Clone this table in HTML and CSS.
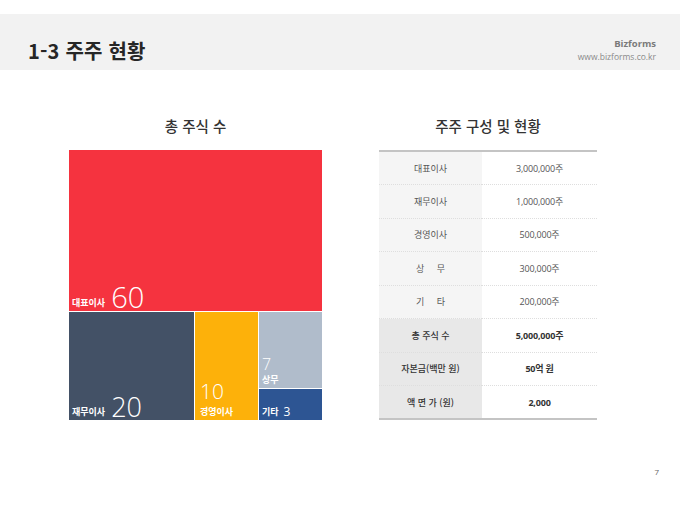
FILE: index.html
```html
<!DOCTYPE html>
<html lang="ko">
<head>
<meta charset="utf-8">
<link rel="stylesheet" href="styles.css">
</head>
<body>
<div class="page">
  <header class="header">
    <h1 class="title">1-3 주주 현황</h1>
    <div class="brand">
      <div class="brand-name">Bizforms</div>
      <div class="brand-url">www.bizforms.co.kr</div>
    </div>
  </header>
  <main class="main">
    <section class="col col-left">
      <h2 class="sec-title">총 주식 수</h2>
      <div class="treemap">
        <div class="tile tile-red">
          <span class="lbl">대표이사</span><span class="num num-60">60</span>
        </div>
        <div class="tm-row">
          <div class="tile tile-navy">
            <span class="lbl">재무이사</span><span class="num num-20">20</span>
          </div>
          <div class="tile tile-yellow">
            <span class="num num-10">10</span>
            <span class="lbl">경영이사</span>
          </div>
          <div class="tm-col">
            <div class="tile tile-gray">
              <span class="num num-7">7</span>
              <span class="lbl">상무</span>
            </div>
            <div class="tile tile-blue">
              <span class="lbl">기타</span><span class="num num-3">3</span>
            </div>
          </div>
        </div>
      </div>
    </section>
    <section class="col col-right">
      <h2 class="sec-title">주주 구성 및 현황</h2>
      <table class="tbl">
        <tbody>
          <tr><th>대표이사</th><td>3,000,000주</td></tr>
          <tr><th>재무이사</th><td>1,000,000주</td></tr>
          <tr><th>경영이사</th><td>500,000주</td></tr>
          <tr><th>상&nbsp;&nbsp;&nbsp;&nbsp;&nbsp;무</th><td>300,000주</td></tr>
          <tr><th>기&nbsp;&nbsp;&nbsp;&nbsp;&nbsp;타</th><td>200,000주</td></tr>
          <tr class="sum"><th>총 주식 수</th><td>5,000,000주</td></tr>
          <tr class="sum"><th>자본금(백만 원)</th><td>50억 원</td></tr>
          <tr class="sum"><th>액 면 가 (원)</th><td>2,000</td></tr>
        </tbody>
      </table>
    </section>
  </main>
  <footer class="footer">7</footer>
</div>
</body>
</html>
```

FILE: styles.css
```css
html, body {
  margin: 0;
  padding: 0;
  background: #ffffff;
}
body {
  font-family: "Noto Sans CJK KR", "Noto Sans", "Liberation Sans", sans-serif;
  color: #333;
}
.page {
  width: 680px;
  height: 510px;
  overflow: hidden;
}
.header {
  margin-top: 14px;
  height: 56px;
  background: #f2f2f2;
  display: flex;
  justify-content: space-between;
  align-items: flex-end;
  padding: 0 24px 0 28px;
  box-sizing: border-box;
}
.title {
  margin: 0 0 8px 0;
  font-size: 20px;
  line-height: 22px;
  font-weight: 700;
  color: #262626;
  letter-spacing: 0.2px;
}
.brand {
  margin-bottom: 7px;
  text-align: right;
}
.brand-name {
  font-family: "Open Sans", "Liberation Sans", sans-serif;
  font-size: 9.5px;
  line-height: 13px;
  font-weight: 700;
  color: #7a7a7a;
}
.brand-url {
  font-family: "Open Sans", "Liberation Sans", sans-serif;
  font-size: 8.5px;
  line-height: 13px;
  color: #8a8a8a;
}
.main {
  display: flex;
  padding-left: 69px;
  gap: 57px;
  margin-top: 46px;
}
.col {
  display: flex;
  flex-direction: column;
}
.col-left { width: 253px; }
.col-right { width: 218px; }
.sec-title {
  margin: 0 0 14px 0;
  font-size: 14.5px;
  line-height: 20px;
  font-weight: 500;
  text-align: center;
  color: #333;
}
.treemap {
  width: 253px;
  height: 270px;
  display: flex;
  flex-direction: column;
  gap: 1px;
  background: #ffffff;
}
.tm-row {
  display: flex;
  gap: 1px;
  flex: 1;
}
.tm-col {
  display: flex;
  flex-direction: column;
  gap: 1px;
  width: 63px;
}
.tile {
  color: #ffffff;
  display: flex;
  box-sizing: border-box;
}
.tile-red {
  height: 161px;
  background: #f5333f;
  align-items: flex-end;
  padding: 0 0 2px 3px;
}
.tile-navy {
  width: 125px;
  background: #435166;
  align-items: flex-end;
  padding: 0 0 2px 3px;
}
.tile-yellow {
  width: 63px;
  background: #fdb10a;
  flex-direction: column;
  justify-content: flex-end;
  align-items: flex-start;
  padding: 0 0 2px 5px;
}
.tile-gray {
  height: 76px;
  background: #b0bccb;
  flex-direction: column;
  justify-content: flex-end;
  align-items: flex-start;
  padding: 0 0 2px 3px;
}
.tile-blue {
  flex: 1;
  background: #2d5593;
  align-items: flex-end;
  padding: 0 0 2px 3px;
}
.lbl {
  font-size: 9px;
  font-weight: 700;
  line-height: 12px;
}
.num {
  font-family: "Open Sans", "Lato", "Liberation Sans", sans-serif;
  font-weight: 300;
}
.num-60 {
  font-size: 29px;
  line-height: 30px;
  margin-left: 6px;
  margin-bottom: -3px;
}
.num-20 {
  font-size: 27px;
  line-height: 28px;
  margin-left: 6px;
  margin-bottom: -3px;
}
.num-10 {
  font-size: 21px;
  line-height: 22px;
  margin-bottom: 4px;
}
.num-7 {
  font-size: 16px;
  line-height: 18px;
  margin-bottom: 1px;
}
.num-3 {
  font-size: 12px;
  line-height: 14px;
  font-weight: 400;
  margin-left: 5px;
  margin-bottom: -1px;
}
.tbl {
  width: 218px;
  border-collapse: collapse;
  border-top: 2px solid #c4c4c4;
  border-bottom: 2px solid #c4c4c4;
  font-size: 9px;
}
.tbl tr {
  height: 33.5px;
  border-bottom: 1px dotted #dedede;
}
.tbl tr:last-child {
  border-bottom: none;
}
.tbl th, .tbl td {
  padding: 0;
  text-align: center;
  vertical-align: middle;
}
.tbl th {
  width: 103px;
  background: #f5f5f5;
  font-weight: 400;
  color: #555;
}
.tbl td {
  font-family: "Open Sans", "Noto Sans CJK KR", sans-serif;
  color: #555;
  letter-spacing: -0.2px;
}
.tbl tr.sum th {
  background: #e8e8e8;
  color: #333;
  font-weight: 500;
}
.tbl tr.sum td {
  font-weight: 700;
  color: #333;
}
.footer {
  margin-top: 47px;
  text-align: right;
  padding-right: 21px;
  font-family: "Open Sans", "Liberation Sans", sans-serif;
  font-size: 8px;
  line-height: 10px;
  color: #666;
}
```
